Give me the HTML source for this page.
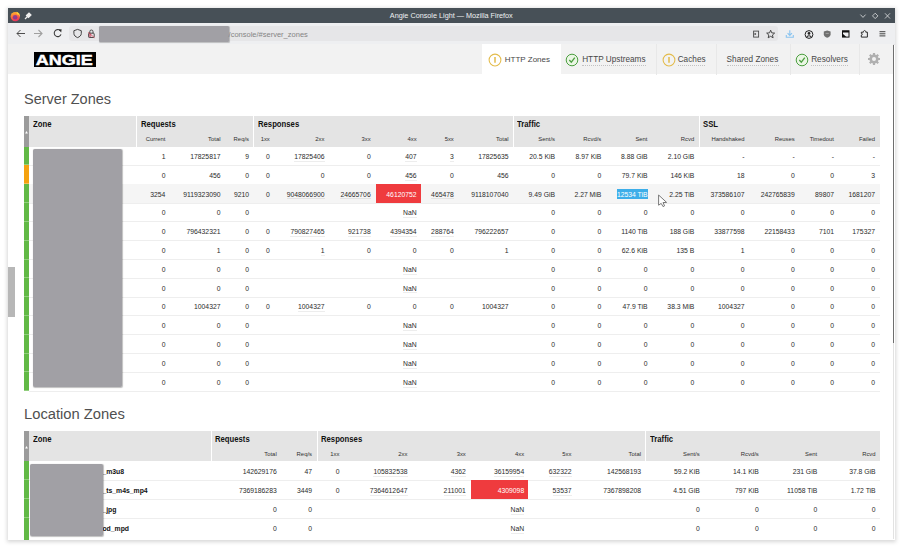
<!DOCTYPE html>
<html><head><meta charset="utf-8"><style>
html,body{margin:0;padding:0;}
body{width:904px;height:548px;overflow:hidden;position:relative;background:#fff;font-family:"Liberation Sans",sans-serif;}
.t{position:absolute;white-space:nowrap;}
.b{position:absolute;}
.u{border-bottom:1px solid rgba(0,0,0,0.07);padding-bottom:0.8px;}
</style></head><body>
<div class="b" style="left:8.00px;top:8.00px;width:886.50px;height:531.50px;background:#fff;box-shadow:0 0.5px 4px 1px rgba(0,0,0,0.16);"></div>
<div class="b" style="left:0;top:0;width:894.5px;height:539.5px;overflow:hidden">
<div class="b" style="left:8.00px;top:8.00px;width:886.50px;height:14.50px;background:#475057;"></div>
<div class="t" style="left:151.30px;top:10.83px;width:600px;text-align:center;font-size:7.25px;line-height:10.149999999999999px;color:#eef0f2;font-weight:normal;">Angie Console Light — Mozilla Firefox</div>
<svg class="b" style="left:10px;top:10.5px" width="11" height="11" viewBox="0 0 11 11"><defs><linearGradient id="ff" x1="0.2" y1="0" x2="0.5" y2="1"><stop offset="0" stop-color="#ffbd2e"/><stop offset="0.45" stop-color="#ff7139"/><stop offset="1" stop-color="#e8305f"/></linearGradient></defs><circle cx="5.3" cy="5.6" r="4.7" fill="url(#ff)"/><circle cx="5.1" cy="6.2" r="2.3" fill="#6e2fa8" opacity="0.75"/><path d="M6.5 0.8 C8.8 1.5 10.2 3.5 10 6 C9.6 4.4 8.2 3.2 6.8 3.2 Z" fill="#ffd43b"/></svg>
<svg class="b" style="left:24px;top:12px" width="8" height="8" viewBox="0 0 8 8"><path d="M1 7 L3.5 4.5 M2.5 3.5 L5 1 L7 3 L4.5 5.5 Z" stroke="#eee" stroke-width="1.2" fill="#eee"/></svg>
<svg class="b" style="left:858px;top:12px" width="34" height="8" viewBox="0 0 34 8"><path d="M2.4 2.6 L5 5.4 L7.6 2.6" stroke="#d8dadc" stroke-width="0.85" fill="none"/><path d="M17.2 1.2 L19.9 3.9 L17.2 6.6 L14.5 3.9 Z" stroke="#d8dadc" stroke-width="0.85" fill="none"/><path d="M27 1.3 L32 6.5 M32 1.3 L27 6.5" stroke="#d8dadc" stroke-width="0.85" fill="none"/></svg>
<div class="b" style="left:8.00px;top:22.50px;width:886.50px;height:21.50px;background:#eeeff1;"></div>
<div class="b" style="left:8.00px;top:43.60px;width:886.50px;height:0.80px;background:#e3e3e5;"></div>
<svg class="b" style="left:14px;top:28px" width="60" height="11" viewBox="0 0 60 11"><path d="M3 5.5 H11 M6.5 2 L3 5.5 L6.5 9" stroke="#454545" stroke-width="0.95" fill="none"/><path d="M20 5.5 H28 M24.5 2 L28 5.5 L24.5 9" stroke="#a0a0a0" stroke-width="1.1" fill="none"/><path d="M46.2 2.6 A3.5 3.5 0 1 0 47.0 6.4" stroke="#3b3b3b" stroke-width="1.05" fill="none"/><path d="M44.6 1.6 L47.6 1.3 L47.2 4.4 Z" fill="#2b2b2b"/></svg>
<div class="b" style="left:69.00px;top:25.60px;width:708.60px;height:15.80px;background:#e6e6e8;border-radius:3px;"></div>
<svg class="b" style="left:72px;top:28px" width="26" height="11" viewBox="0 0 26 11"><path d="M5.6 1.4 L9.3 2.7 V5.4 C9.3 7.6 7.6 8.8 5.6 9.6 C3.6 8.8 1.9 7.6 1.9 5.4 V2.7 Z" stroke="#3b3b3b" stroke-width="0.95" fill="none"/><rect x="16.6" y="5.2" width="5.6" height="4.3" rx="0.7" stroke="#3b3b3b" stroke-width="0.9" fill="none"/><path d="M17.8 5.2 V3.6 A1.6 1.6 0 0 1 21 3.6 V5.2" stroke="#3b3b3b" stroke-width="0.9" fill="none"/><path d="M16.2 4.3 L22.6 9.8" stroke="#d7263d" stroke-width="0.8" opacity="0.8"/><rect x="16.8" y="5.6" width="2.4" height="3.6" fill="#c0304a" opacity="0.55"/></svg>
<div class="b" style="left:99.00px;top:26.00px;width:129.90px;height:16.30px;background:#a1a0a5;border-radius:1.5px;box-shadow:0.5px 0.5px 0.8px rgba(0,0,0,0.2);"></div>
<div class="t" style="left:228.60px;top:30.15px;font-size:7.5px;line-height:10.5px;color:#858585;font-weight:normal;">/console/#server_zones</div>
<svg class="b" style="left:750px;top:27.5px" width="140" height="12" viewBox="0 0 140 12"><rect x="3.6" y="3.1" width="5" height="6" stroke="#4a4a4a" stroke-width="0.9" fill="none"/><path d="M4.6 4.8 L6.4 6 L4.6 7.2 Z" fill="#222"/><path d="M20.65 2.20 L21.77 4.86 L24.64 5.10 L22.46 6.99 L23.12 9.80 L20.65 8.30 L18.18 9.80 L18.84 6.99 L16.66 5.10 L19.53 4.86 Z" stroke="#3a3a3a" stroke-width="0.9" fill="none" stroke-linejoin="round"/><path d="M39.8 2.2 V7.2 M37.6 5.2 L39.8 7.4 L42 5.2 M36.3 7 V9.2 H43.3 V7" stroke="#8ac4f0" stroke-width="1.1" fill="none"/><circle cx="59" cy="6.5" r="3.9" stroke="#222" stroke-width="1" fill="none"/><circle cx="59" cy="5.4" r="1.35" fill="#222"/><path d="M56.8 9 C57.4 7.4 60.6 7.4 61.2 9" stroke="#222" stroke-width="1.1" fill="none"/><path d="M77.2 2.6 L80.6 3.6 V6.2 C80.6 8.1 79 9.0 77.2 9.7 C75.4 9.0 73.8 8.1 73.8 6.2 V3.6 Z" fill="#707070"/><path d="M75.6 5.4 H78.8" stroke="#b8b8b8" stroke-width="0.7"/><rect x="92.5" y="2.8" width="6.5" height="6.3" stroke="#111" stroke-width="1" fill="none"/><rect x="92.5" y="2.8" width="6.5" height="1.7" fill="#111"/><path d="M92.5 5.4 L92.5 9.1 L96.4 9.1 Z" fill="#111"/><path d="M111.3 9.1 V7.1 C112.7 7.1 112.7 5.3 111.3 5.3 V4.2 H113.4 C113.2 2 116 2 115.8 4.2 H117.4 V9.1 Z" stroke="#222" stroke-width="0.95" fill="none" stroke-linejoin="round"/><path d="M129.5 3.7 H135.4 M129.5 5.8 H135.4 M129.5 7.9 H135.4" stroke="#222" stroke-width="0.85"/></svg>
<div class="b" style="left:8.00px;top:44.40px;width:884.90px;height:30.10px;background:#f2f2f2;"></div>
<div class="b" style="left:892.90px;top:44.60px;width:1.20px;height:494.90px;background:#e2e2e2;"></div>
<div class="b" style="left:892.90px;top:44.60px;width:1.20px;height:298.10px;background:#6e6e6e;"></div>
<div class="b" style="left:34.30px;top:51.90px;width:61.30px;height:15.60px;background:#000;"></div>
<svg class="b" style="left:34.3px;top:51.9px" width="61" height="15.2" viewBox="0 0 61 15.2"><text x="1.7" y="13.15" textLength="57.0" lengthAdjust="spacingAndGlyphs" font-family="Liberation Sans" font-weight="bold" font-size="15.4" fill="#fff" stroke="#fff" stroke-width="0.45">ANGIE</text></svg>
<div class="b" style="left:482.10px;top:44.40px;width:78.50px;height:30.10px;background:#fff;"></div>
<div class="b" style="left:655.90px;top:44.00px;width:1.00px;height:30.50px;background:#e8e8e8;"></div>
<div class="b" style="left:715.80px;top:44.00px;width:1.00px;height:30.50px;background:#e8e8e8;"></div>
<div class="b" style="left:789.70px;top:44.00px;width:1.00px;height:30.50px;background:#e8e8e8;"></div>
<div class="b" style="left:858.80px;top:44.00px;width:1.00px;height:30.50px;background:#e8e8e8;"></div>
<svg class="b" style="left:487.90px;top:53.00px" width="14" height="14" viewBox="0 0 14 14"><circle cx="7" cy="7" r="5.9" stroke="#e3bb4a" stroke-width="1.05" fill="none"/><path d="M7 3.9 V9.8" stroke="#e3bb4a" stroke-width="1.5"/></svg>
<div class="t" style="left:504.80px;top:54.00px;font-size:8.0px;line-height:11.2px;color:#474747;font-weight:normal;">HTTP Zones</div>
<svg class="b" style="left:565.40px;top:53.20px" width="14" height="14" viewBox="0 0 14 14"><circle cx="7" cy="7" r="5.8" stroke="#4c9f40" stroke-width="1.0" fill="#eaf6e4"/><path d="M4.3 7.0 L6.3 9.2 L9.8 4.7" stroke="#4c9f40" stroke-width="1.3" fill="none"/></svg>
<div class="t" style="left:582.20px;top:53.86px;font-size:8.2px;line-height:11.479999999999999px;color:#474747;font-weight:normal;letter-spacing:0.02px;">HTTP Upstreams</div>
<div class="b" style="left:582.20px;top:65.0px;width:63.60px;height:0;border-top:1px dotted #c2c2c2"></div>
<svg class="b" style="left:661.50px;top:53.00px" width="14" height="14" viewBox="0 0 14 14"><circle cx="7" cy="7" r="5.9" stroke="#e3bb4a" stroke-width="1.05" fill="none"/><path d="M7 3.9 V9.8" stroke="#e3bb4a" stroke-width="1.5"/></svg>
<div class="t" style="left:677.70px;top:53.86px;font-size:8.2px;line-height:11.479999999999999px;color:#474747;font-weight:normal;letter-spacing:0.02px;">Caches</div>
<div class="b" style="left:677.70px;top:65.0px;width:27.60px;height:0;border-top:1px dotted #c2c2c2"></div>
<div class="t" style="left:726.60px;top:53.86px;font-size:8.2px;line-height:11.479999999999999px;color:#474747;font-weight:normal;letter-spacing:0.02px;">Shared Zones</div>
<div class="b" style="left:726.60px;top:65.0px;width:52.50px;height:0;border-top:1px dotted #c2c2c2"></div>
<svg class="b" style="left:794.50px;top:53.20px" width="14" height="14" viewBox="0 0 14 14"><circle cx="7" cy="7" r="5.8" stroke="#4c9f40" stroke-width="1.0" fill="#eaf6e4"/><path d="M4.3 7.0 L6.3 9.2 L9.8 4.7" stroke="#4c9f40" stroke-width="1.3" fill="none"/></svg>
<div class="t" style="left:811.20px;top:53.86px;font-size:8.2px;line-height:11.479999999999999px;color:#474747;font-weight:normal;letter-spacing:0.02px;">Resolvers</div>
<div class="b" style="left:811.20px;top:65.0px;width:36.50px;height:0;border-top:1px dotted #c2c2c2"></div>
<svg class="b" style="left:867px;top:52.3px" width="14" height="14" viewBox="0 0 14 14"><circle cx="7" cy="7" r="4.6" fill="#b0b0b0"/><g stroke="#b0b0b0" stroke-width="2.2"><path d="M7 1 V13 M1 7 H13 M2.8 2.8 L11.2 11.2 M11.2 2.8 L2.8 11.2"/></g><circle cx="7" cy="7" r="2" fill="#f2f2f2"/></svg>
<div class="t" style="left:24.00px;top:87.66px;font-size:15.2px;line-height:21.279999999999998px;color:#505050;font-weight:normal;transform:scaleX(0.955);transform-origin:0 0;">Server Zones</div>
<div class="t" style="left:24.00px;top:403.26px;font-size:15.2px;line-height:21.279999999999998px;color:#505050;font-weight:normal;transform:scaleX(0.971);transform-origin:0 0;">Location Zones</div>
<div class="b" style="left:24.00px;top:116.00px;width:856.00px;height:30.60px;background:#e4e4e4;"></div>
<div class="b" style="left:24.00px;top:116.00px;width:5.00px;height:30.60px;background:#9b9b9b;"></div>
<svg class="b" style="left:24.00px;top:130.00px" width="5" height="5" viewBox="0 0 5 5"><path d="M1.1 3.6 L3.9 3.6 L2.5 1.0 Z" fill="#fff"/></svg>
<div class="t" style="left:33.00px;top:118.59px;font-size:8.3px;line-height:11.620000000000001px;color:#111;font-weight:bold;transform:scaleX(0.93);transform-origin:0 0;">Zone</div>
<div class="t" style="left:141.10px;top:118.59px;font-size:8.3px;line-height:11.620000000000001px;color:#111;font-weight:bold;transform:scaleX(0.93);transform-origin:0 0;">Requests</div>
<div class="b" style="left:136.00px;top:116.00px;width:1.00px;height:30.60px;background:#fff;"></div>
<div class="t" style="left:257.70px;top:118.59px;font-size:8.3px;line-height:11.620000000000001px;color:#111;font-weight:bold;transform:scaleX(0.93);transform-origin:0 0;">Responses</div>
<div class="b" style="left:253.00px;top:116.00px;width:1.00px;height:30.60px;background:#fff;"></div>
<div class="t" style="left:517.30px;top:118.59px;font-size:8.3px;line-height:11.620000000000001px;color:#111;font-weight:bold;transform:scaleX(0.93);transform-origin:0 0;">Traffic</div>
<div class="b" style="left:512.50px;top:116.00px;width:1.00px;height:30.60px;background:#fff;"></div>
<div class="t" style="left:702.50px;top:118.59px;font-size:8.3px;line-height:11.620000000000001px;color:#111;font-weight:bold;transform:scaleX(0.93);transform-origin:0 0;">SSL</div>
<div class="b" style="left:698.50px;top:116.00px;width:1.00px;height:30.60px;background:#fff;"></div>
<div class="t" style="left:-134.60px;top:135.37px;width:300px;text-align:right;font-size:5.9px;line-height:8.26px;color:#303030;font-weight:normal;">Current</div>
<div class="t" style="left:-79.50px;top:135.37px;width:300px;text-align:right;font-size:5.9px;line-height:8.26px;color:#303030;font-weight:normal;">Total</div>
<div class="t" style="left:-51.00px;top:135.37px;width:300px;text-align:right;font-size:5.9px;line-height:8.26px;color:#303030;font-weight:normal;">Req/s</div>
<div class="t" style="left:-30.20px;top:135.37px;width:300px;text-align:right;font-size:5.9px;line-height:8.26px;color:#303030;font-weight:normal;">1xx</div>
<div class="t" style="left:24.50px;top:135.37px;width:300px;text-align:right;font-size:5.9px;line-height:8.26px;color:#303030;font-weight:normal;">2xx</div>
<div class="t" style="left:70.70px;top:135.37px;width:300px;text-align:right;font-size:5.9px;line-height:8.26px;color:#303030;font-weight:normal;">3xx</div>
<div class="t" style="left:116.60px;top:135.37px;width:300px;text-align:right;font-size:5.9px;line-height:8.26px;color:#303030;font-weight:normal;">4xx</div>
<div class="t" style="left:153.80px;top:135.37px;width:300px;text-align:right;font-size:5.9px;line-height:8.26px;color:#303030;font-weight:normal;">5xx</div>
<div class="t" style="left:208.50px;top:135.37px;width:300px;text-align:right;font-size:5.9px;line-height:8.26px;color:#303030;font-weight:normal;">Total</div>
<div class="t" style="left:255.00px;top:135.37px;width:300px;text-align:right;font-size:5.9px;line-height:8.26px;color:#303030;font-weight:normal;">Sent/s</div>
<div class="t" style="left:301.30px;top:135.37px;width:300px;text-align:right;font-size:5.9px;line-height:8.26px;color:#303030;font-weight:normal;">Rcvd/s</div>
<div class="t" style="left:347.50px;top:135.37px;width:300px;text-align:right;font-size:5.9px;line-height:8.26px;color:#303030;font-weight:normal;">Sent</div>
<div class="t" style="left:394.20px;top:135.37px;width:300px;text-align:right;font-size:5.9px;line-height:8.26px;color:#303030;font-weight:normal;">Rcvd</div>
<div class="t" style="left:444.50px;top:135.37px;width:300px;text-align:right;font-size:5.9px;line-height:8.26px;color:#303030;font-weight:normal;">Handshaked</div>
<div class="t" style="left:494.70px;top:135.37px;width:300px;text-align:right;font-size:5.9px;line-height:8.26px;color:#303030;font-weight:normal;">Reuses</div>
<div class="t" style="left:534.00px;top:135.37px;width:300px;text-align:right;font-size:5.9px;line-height:8.26px;color:#303030;font-weight:normal;">Timedout</div>
<div class="t" style="left:575.00px;top:135.37px;width:300px;text-align:right;font-size:5.9px;line-height:8.26px;color:#303030;font-weight:normal;">Failed</div>
<div class="b" style="left:24.00px;top:146.60px;width:5.00px;height:18.82px;background:#62b946;"></div>
<div class="b" style="left:29.00px;top:164.92px;width:851.00px;height:1.00px;background:#eeeeee;"></div>
<div class="b" style="left:24.00px;top:164.00px;width:5.00px;height:1.00px;background:rgba(255,255,255,0.3);"></div>
<div class="b" style="left:24.00px;top:165.42px;width:5.00px;height:18.82px;background:#f5a20f;"></div>
<div class="b" style="left:29.00px;top:183.74px;width:851.00px;height:1.00px;background:#eeeeee;"></div>
<div class="b" style="left:24.00px;top:183.00px;width:5.00px;height:1.00px;background:rgba(255,255,255,0.3);"></div>
<div class="b" style="left:29.00px;top:184.24px;width:851.00px;height:18.82px;background:#f5f5f5;"></div>
<div class="b" style="left:24.00px;top:184.24px;width:5.00px;height:18.82px;background:#62b946;"></div>
<div class="b" style="left:29.00px;top:202.56px;width:851.00px;height:1.00px;background:#eeeeee;"></div>
<div class="b" style="left:24.00px;top:202.00px;width:5.00px;height:1.00px;background:rgba(255,255,255,0.3);"></div>
<div class="b" style="left:24.00px;top:203.06px;width:5.00px;height:18.82px;background:#62b946;"></div>
<div class="b" style="left:29.00px;top:221.38px;width:851.00px;height:1.00px;background:#eeeeee;"></div>
<div class="b" style="left:24.00px;top:221.00px;width:5.00px;height:1.00px;background:rgba(255,255,255,0.3);"></div>
<div class="b" style="left:24.00px;top:221.88px;width:5.00px;height:18.82px;background:#62b946;"></div>
<div class="b" style="left:29.00px;top:240.20px;width:851.00px;height:1.00px;background:#eeeeee;"></div>
<div class="b" style="left:24.00px;top:240.00px;width:5.00px;height:1.00px;background:rgba(255,255,255,0.3);"></div>
<div class="b" style="left:24.00px;top:240.70px;width:5.00px;height:18.82px;background:#62b946;"></div>
<div class="b" style="left:29.00px;top:259.02px;width:851.00px;height:1.00px;background:#eeeeee;"></div>
<div class="b" style="left:24.00px;top:259.00px;width:5.00px;height:1.00px;background:rgba(255,255,255,0.3);"></div>
<div class="b" style="left:24.00px;top:259.52px;width:5.00px;height:18.82px;background:#62b946;"></div>
<div class="b" style="left:29.00px;top:277.84px;width:851.00px;height:1.00px;background:#eeeeee;"></div>
<div class="b" style="left:24.00px;top:277.00px;width:5.00px;height:1.00px;background:rgba(255,255,255,0.3);"></div>
<div class="b" style="left:24.00px;top:278.34px;width:5.00px;height:18.82px;background:#62b946;"></div>
<div class="b" style="left:29.00px;top:296.66px;width:851.00px;height:1.00px;background:#eeeeee;"></div>
<div class="b" style="left:24.00px;top:296.00px;width:5.00px;height:1.00px;background:rgba(255,255,255,0.3);"></div>
<div class="b" style="left:24.00px;top:297.16px;width:5.00px;height:18.82px;background:#62b946;"></div>
<div class="b" style="left:29.00px;top:315.48px;width:851.00px;height:1.00px;background:#eeeeee;"></div>
<div class="b" style="left:24.00px;top:315.00px;width:5.00px;height:1.00px;background:rgba(255,255,255,0.3);"></div>
<div class="b" style="left:24.00px;top:315.98px;width:5.00px;height:18.82px;background:#62b946;"></div>
<div class="b" style="left:29.00px;top:334.30px;width:851.00px;height:1.00px;background:#eeeeee;"></div>
<div class="b" style="left:24.00px;top:334.00px;width:5.00px;height:1.00px;background:rgba(255,255,255,0.3);"></div>
<div class="b" style="left:24.00px;top:334.80px;width:5.00px;height:18.82px;background:#62b946;"></div>
<div class="b" style="left:29.00px;top:353.12px;width:851.00px;height:1.00px;background:#eeeeee;"></div>
<div class="b" style="left:24.00px;top:353.00px;width:5.00px;height:1.00px;background:rgba(255,255,255,0.3);"></div>
<div class="b" style="left:24.00px;top:353.62px;width:5.00px;height:18.82px;background:#62b946;"></div>
<div class="b" style="left:29.00px;top:371.94px;width:851.00px;height:1.00px;background:#eeeeee;"></div>
<div class="b" style="left:24.00px;top:371.00px;width:5.00px;height:1.00px;background:rgba(255,255,255,0.3);"></div>
<div class="b" style="left:24.00px;top:372.44px;width:5.00px;height:18.82px;background:#62b946;"></div>
<div class="b" style="left:29.00px;top:390.76px;width:851.00px;height:1.00px;background:#eeeeee;"></div>
<div class="b" style="left:24.00px;top:390.00px;width:5.00px;height:1.00px;background:rgba(255,255,255,0.3);"></div>
<div class="b" style="left:375.70px;top:184.24px;width:45.00px;height:18.82px;background:#ef3b3e;"></div>
<div class="t" style="left:-134.60px;top:151.90px;width:300px;text-align:right;font-size:6.8px;line-height:9.52px;color:#2b2b2b;font-weight:normal;">1</div>
<div class="t" style="left:-79.50px;top:151.90px;width:300px;text-align:right;font-size:6.8px;line-height:9.52px;color:#2b2b2b;font-weight:normal;">17825817</div>
<div class="t" style="left:-51.00px;top:151.90px;width:300px;text-align:right;font-size:6.8px;line-height:9.52px;color:#2b2b2b;font-weight:normal;">9</div>
<div class="t" style="left:-30.20px;top:151.90px;width:300px;text-align:right;font-size:6.8px;line-height:9.52px;color:#2b2b2b;font-weight:normal;">0</div>
<div class="t" style="left:24.50px;top:151.90px;width:300px;text-align:right;font-size:6.8px;line-height:9.52px;color:#2b2b2b;font-weight:normal;"><span class="u">17825406</span></div>
<div class="t" style="left:70.70px;top:151.90px;width:300px;text-align:right;font-size:6.8px;line-height:9.52px;color:#2b2b2b;font-weight:normal;">0</div>
<div class="t" style="left:116.60px;top:151.90px;width:300px;text-align:right;font-size:6.8px;line-height:9.52px;color:#2b2b2b;font-weight:normal;"><span class="u">407</span></div>
<div class="t" style="left:153.80px;top:151.90px;width:300px;text-align:right;font-size:6.8px;line-height:9.52px;color:#2b2b2b;font-weight:normal;"><span class="u">3</span></div>
<div class="t" style="left:208.50px;top:151.90px;width:300px;text-align:right;font-size:6.8px;line-height:9.52px;color:#2b2b2b;font-weight:normal;">17825635</div>
<div class="t" style="left:255.00px;top:151.90px;width:300px;text-align:right;font-size:6.8px;line-height:9.52px;color:#2b2b2b;font-weight:normal;">20.5 KiB</div>
<div class="t" style="left:301.30px;top:151.90px;width:300px;text-align:right;font-size:6.8px;line-height:9.52px;color:#2b2b2b;font-weight:normal;">8.97 KiB</div>
<div class="t" style="left:347.50px;top:151.90px;width:300px;text-align:right;font-size:6.8px;line-height:9.52px;color:#2b2b2b;font-weight:normal;">8.88 GiB</div>
<div class="t" style="left:394.20px;top:151.90px;width:300px;text-align:right;font-size:6.8px;line-height:9.52px;color:#2b2b2b;font-weight:normal;">2.10 GiB</div>
<div class="t" style="left:444.50px;top:151.90px;width:300px;text-align:right;font-size:6.8px;line-height:9.52px;color:#2b2b2b;font-weight:normal;">-</div>
<div class="t" style="left:494.70px;top:151.90px;width:300px;text-align:right;font-size:6.8px;line-height:9.52px;color:#2b2b2b;font-weight:normal;">-</div>
<div class="t" style="left:534.00px;top:151.90px;width:300px;text-align:right;font-size:6.8px;line-height:9.52px;color:#2b2b2b;font-weight:normal;">-</div>
<div class="t" style="left:575.00px;top:151.90px;width:300px;text-align:right;font-size:6.8px;line-height:9.52px;color:#2b2b2b;font-weight:normal;">-</div>
<div class="t" style="left:-134.60px;top:170.72px;width:300px;text-align:right;font-size:6.8px;line-height:9.52px;color:#2b2b2b;font-weight:normal;">0</div>
<div class="t" style="left:-79.50px;top:170.72px;width:300px;text-align:right;font-size:6.8px;line-height:9.52px;color:#2b2b2b;font-weight:normal;">456</div>
<div class="t" style="left:-51.00px;top:170.72px;width:300px;text-align:right;font-size:6.8px;line-height:9.52px;color:#2b2b2b;font-weight:normal;">0</div>
<div class="t" style="left:-30.20px;top:170.72px;width:300px;text-align:right;font-size:6.8px;line-height:9.52px;color:#2b2b2b;font-weight:normal;">0</div>
<div class="t" style="left:24.50px;top:170.72px;width:300px;text-align:right;font-size:6.8px;line-height:9.52px;color:#2b2b2b;font-weight:normal;">0</div>
<div class="t" style="left:70.70px;top:170.72px;width:300px;text-align:right;font-size:6.8px;line-height:9.52px;color:#2b2b2b;font-weight:normal;">0</div>
<div class="t" style="left:116.60px;top:170.72px;width:300px;text-align:right;font-size:6.8px;line-height:9.52px;color:#2b2b2b;font-weight:normal;"><span class="u">456</span></div>
<div class="t" style="left:153.80px;top:170.72px;width:300px;text-align:right;font-size:6.8px;line-height:9.52px;color:#2b2b2b;font-weight:normal;">0</div>
<div class="t" style="left:208.50px;top:170.72px;width:300px;text-align:right;font-size:6.8px;line-height:9.52px;color:#2b2b2b;font-weight:normal;">456</div>
<div class="t" style="left:255.00px;top:170.72px;width:300px;text-align:right;font-size:6.8px;line-height:9.52px;color:#2b2b2b;font-weight:normal;">0</div>
<div class="t" style="left:301.30px;top:170.72px;width:300px;text-align:right;font-size:6.8px;line-height:9.52px;color:#2b2b2b;font-weight:normal;">0</div>
<div class="t" style="left:347.50px;top:170.72px;width:300px;text-align:right;font-size:6.8px;line-height:9.52px;color:#2b2b2b;font-weight:normal;">79.7 KiB</div>
<div class="t" style="left:394.20px;top:170.72px;width:300px;text-align:right;font-size:6.8px;line-height:9.52px;color:#2b2b2b;font-weight:normal;">146 KiB</div>
<div class="t" style="left:444.50px;top:170.72px;width:300px;text-align:right;font-size:6.8px;line-height:9.52px;color:#2b2b2b;font-weight:normal;">18</div>
<div class="t" style="left:494.70px;top:170.72px;width:300px;text-align:right;font-size:6.8px;line-height:9.52px;color:#2b2b2b;font-weight:normal;">0</div>
<div class="t" style="left:534.00px;top:170.72px;width:300px;text-align:right;font-size:6.8px;line-height:9.52px;color:#2b2b2b;font-weight:normal;">0</div>
<div class="t" style="left:575.00px;top:170.72px;width:300px;text-align:right;font-size:6.8px;line-height:9.52px;color:#2b2b2b;font-weight:normal;">3</div>
<div class="t" style="left:-134.60px;top:189.54px;width:300px;text-align:right;font-size:6.8px;line-height:9.52px;color:#2b2b2b;font-weight:normal;">3254</div>
<div class="t" style="left:-79.50px;top:189.54px;width:300px;text-align:right;font-size:6.8px;line-height:9.52px;color:#2b2b2b;font-weight:normal;">9119323090</div>
<div class="t" style="left:-51.00px;top:189.54px;width:300px;text-align:right;font-size:6.8px;line-height:9.52px;color:#2b2b2b;font-weight:normal;">9210</div>
<div class="t" style="left:-30.20px;top:189.54px;width:300px;text-align:right;font-size:6.8px;line-height:9.52px;color:#2b2b2b;font-weight:normal;">0</div>
<div class="t" style="left:24.50px;top:189.54px;width:300px;text-align:right;font-size:6.8px;line-height:9.52px;color:#2b2b2b;font-weight:normal;"><span class="u">9048066900</span></div>
<div class="t" style="left:70.70px;top:189.54px;width:300px;text-align:right;font-size:6.8px;line-height:9.52px;color:#2b2b2b;font-weight:normal;"><span class="u">24665706</span></div>
<div class="t" style="left:116.60px;top:189.54px;width:300px;text-align:right;font-size:6.8px;line-height:9.52px;color:#fff;font-weight:normal;">46120752</div>
<div class="t" style="left:153.80px;top:189.54px;width:300px;text-align:right;font-size:6.8px;line-height:9.52px;color:#2b2b2b;font-weight:normal;"><span class="u">465478</span></div>
<div class="t" style="left:208.50px;top:189.54px;width:300px;text-align:right;font-size:6.8px;line-height:9.52px;color:#2b2b2b;font-weight:normal;">9118107040</div>
<div class="t" style="left:255.00px;top:189.54px;width:300px;text-align:right;font-size:6.8px;line-height:9.52px;color:#2b2b2b;font-weight:normal;">9.49 GiB</div>
<div class="t" style="left:301.30px;top:189.54px;width:300px;text-align:right;font-size:6.8px;line-height:9.52px;color:#2b2b2b;font-weight:normal;">2.27 MiB</div>
<div class="t" style="left:347.50px;top:189.54px;width:300px;text-align:right;font-size:6.8px;line-height:9.52px;color:#2b2b2b;font-weight:normal;">12534 TiB</div>
<div class="t" style="left:394.20px;top:189.54px;width:300px;text-align:right;font-size:6.8px;line-height:9.52px;color:#2b2b2b;font-weight:normal;">2.25 TiB</div>
<div class="t" style="left:444.50px;top:189.54px;width:300px;text-align:right;font-size:6.8px;line-height:9.52px;color:#2b2b2b;font-weight:normal;">373586107</div>
<div class="t" style="left:494.70px;top:189.54px;width:300px;text-align:right;font-size:6.8px;line-height:9.52px;color:#2b2b2b;font-weight:normal;">242765839</div>
<div class="t" style="left:534.00px;top:189.54px;width:300px;text-align:right;font-size:6.8px;line-height:9.52px;color:#2b2b2b;font-weight:normal;">89807</div>
<div class="t" style="left:575.00px;top:189.54px;width:300px;text-align:right;font-size:6.8px;line-height:9.52px;color:#2b2b2b;font-weight:normal;">1681207</div>
<div class="t" style="left:-134.60px;top:208.36px;width:300px;text-align:right;font-size:6.8px;line-height:9.52px;color:#2b2b2b;font-weight:normal;">0</div>
<div class="t" style="left:-79.50px;top:208.36px;width:300px;text-align:right;font-size:6.8px;line-height:9.52px;color:#2b2b2b;font-weight:normal;">0</div>
<div class="t" style="left:-51.00px;top:208.36px;width:300px;text-align:right;font-size:6.8px;line-height:9.52px;color:#2b2b2b;font-weight:normal;">0</div>
<div class="t" style="left:116.60px;top:208.36px;width:300px;text-align:right;font-size:6.8px;line-height:9.52px;color:#2b2b2b;font-weight:normal;"><span class="u">NaN</span></div>
<div class="t" style="left:255.00px;top:208.36px;width:300px;text-align:right;font-size:6.8px;line-height:9.52px;color:#2b2b2b;font-weight:normal;">0</div>
<div class="t" style="left:301.30px;top:208.36px;width:300px;text-align:right;font-size:6.8px;line-height:9.52px;color:#2b2b2b;font-weight:normal;">0</div>
<div class="t" style="left:347.50px;top:208.36px;width:300px;text-align:right;font-size:6.8px;line-height:9.52px;color:#2b2b2b;font-weight:normal;">0</div>
<div class="t" style="left:394.20px;top:208.36px;width:300px;text-align:right;font-size:6.8px;line-height:9.52px;color:#2b2b2b;font-weight:normal;">0</div>
<div class="t" style="left:444.50px;top:208.36px;width:300px;text-align:right;font-size:6.8px;line-height:9.52px;color:#2b2b2b;font-weight:normal;">0</div>
<div class="t" style="left:494.70px;top:208.36px;width:300px;text-align:right;font-size:6.8px;line-height:9.52px;color:#2b2b2b;font-weight:normal;">0</div>
<div class="t" style="left:534.00px;top:208.36px;width:300px;text-align:right;font-size:6.8px;line-height:9.52px;color:#2b2b2b;font-weight:normal;">0</div>
<div class="t" style="left:575.00px;top:208.36px;width:300px;text-align:right;font-size:6.8px;line-height:9.52px;color:#2b2b2b;font-weight:normal;">0</div>
<div class="t" style="left:-134.60px;top:227.18px;width:300px;text-align:right;font-size:6.8px;line-height:9.52px;color:#2b2b2b;font-weight:normal;">0</div>
<div class="t" style="left:-79.50px;top:227.18px;width:300px;text-align:right;font-size:6.8px;line-height:9.52px;color:#2b2b2b;font-weight:normal;">796432321</div>
<div class="t" style="left:-51.00px;top:227.18px;width:300px;text-align:right;font-size:6.8px;line-height:9.52px;color:#2b2b2b;font-weight:normal;">0</div>
<div class="t" style="left:-30.20px;top:227.18px;width:300px;text-align:right;font-size:6.8px;line-height:9.52px;color:#2b2b2b;font-weight:normal;">0</div>
<div class="t" style="left:24.50px;top:227.18px;width:300px;text-align:right;font-size:6.8px;line-height:9.52px;color:#2b2b2b;font-weight:normal;"><span class="u">790827465</span></div>
<div class="t" style="left:70.70px;top:227.18px;width:300px;text-align:right;font-size:6.8px;line-height:9.52px;color:#2b2b2b;font-weight:normal;"><span class="u">921738</span></div>
<div class="t" style="left:116.60px;top:227.18px;width:300px;text-align:right;font-size:6.8px;line-height:9.52px;color:#2b2b2b;font-weight:normal;"><span class="u">4394354</span></div>
<div class="t" style="left:153.80px;top:227.18px;width:300px;text-align:right;font-size:6.8px;line-height:9.52px;color:#2b2b2b;font-weight:normal;"><span class="u">288764</span></div>
<div class="t" style="left:208.50px;top:227.18px;width:300px;text-align:right;font-size:6.8px;line-height:9.52px;color:#2b2b2b;font-weight:normal;">796222657</div>
<div class="t" style="left:255.00px;top:227.18px;width:300px;text-align:right;font-size:6.8px;line-height:9.52px;color:#2b2b2b;font-weight:normal;">0</div>
<div class="t" style="left:301.30px;top:227.18px;width:300px;text-align:right;font-size:6.8px;line-height:9.52px;color:#2b2b2b;font-weight:normal;">0</div>
<div class="t" style="left:347.50px;top:227.18px;width:300px;text-align:right;font-size:6.8px;line-height:9.52px;color:#2b2b2b;font-weight:normal;">1140 TiB</div>
<div class="t" style="left:394.20px;top:227.18px;width:300px;text-align:right;font-size:6.8px;line-height:9.52px;color:#2b2b2b;font-weight:normal;">188 GiB</div>
<div class="t" style="left:444.50px;top:227.18px;width:300px;text-align:right;font-size:6.8px;line-height:9.52px;color:#2b2b2b;font-weight:normal;">33877598</div>
<div class="t" style="left:494.70px;top:227.18px;width:300px;text-align:right;font-size:6.8px;line-height:9.52px;color:#2b2b2b;font-weight:normal;">22158433</div>
<div class="t" style="left:534.00px;top:227.18px;width:300px;text-align:right;font-size:6.8px;line-height:9.52px;color:#2b2b2b;font-weight:normal;">7101</div>
<div class="t" style="left:575.00px;top:227.18px;width:300px;text-align:right;font-size:6.8px;line-height:9.52px;color:#2b2b2b;font-weight:normal;">175327</div>
<div class="t" style="left:-134.60px;top:246.00px;width:300px;text-align:right;font-size:6.8px;line-height:9.52px;color:#2b2b2b;font-weight:normal;">0</div>
<div class="t" style="left:-79.50px;top:246.00px;width:300px;text-align:right;font-size:6.8px;line-height:9.52px;color:#2b2b2b;font-weight:normal;">1</div>
<div class="t" style="left:-51.00px;top:246.00px;width:300px;text-align:right;font-size:6.8px;line-height:9.52px;color:#2b2b2b;font-weight:normal;">0</div>
<div class="t" style="left:-30.20px;top:246.00px;width:300px;text-align:right;font-size:6.8px;line-height:9.52px;color:#2b2b2b;font-weight:normal;">0</div>
<div class="t" style="left:24.50px;top:246.00px;width:300px;text-align:right;font-size:6.8px;line-height:9.52px;color:#2b2b2b;font-weight:normal;"><span class="u">1</span></div>
<div class="t" style="left:70.70px;top:246.00px;width:300px;text-align:right;font-size:6.8px;line-height:9.52px;color:#2b2b2b;font-weight:normal;">0</div>
<div class="t" style="left:116.60px;top:246.00px;width:300px;text-align:right;font-size:6.8px;line-height:9.52px;color:#2b2b2b;font-weight:normal;">0</div>
<div class="t" style="left:153.80px;top:246.00px;width:300px;text-align:right;font-size:6.8px;line-height:9.52px;color:#2b2b2b;font-weight:normal;">0</div>
<div class="t" style="left:208.50px;top:246.00px;width:300px;text-align:right;font-size:6.8px;line-height:9.52px;color:#2b2b2b;font-weight:normal;">1</div>
<div class="t" style="left:255.00px;top:246.00px;width:300px;text-align:right;font-size:6.8px;line-height:9.52px;color:#2b2b2b;font-weight:normal;">0</div>
<div class="t" style="left:301.30px;top:246.00px;width:300px;text-align:right;font-size:6.8px;line-height:9.52px;color:#2b2b2b;font-weight:normal;">0</div>
<div class="t" style="left:347.50px;top:246.00px;width:300px;text-align:right;font-size:6.8px;line-height:9.52px;color:#2b2b2b;font-weight:normal;">62.6 KiB</div>
<div class="t" style="left:394.20px;top:246.00px;width:300px;text-align:right;font-size:6.8px;line-height:9.52px;color:#2b2b2b;font-weight:normal;">135 B</div>
<div class="t" style="left:444.50px;top:246.00px;width:300px;text-align:right;font-size:6.8px;line-height:9.52px;color:#2b2b2b;font-weight:normal;">1</div>
<div class="t" style="left:494.70px;top:246.00px;width:300px;text-align:right;font-size:6.8px;line-height:9.52px;color:#2b2b2b;font-weight:normal;">0</div>
<div class="t" style="left:534.00px;top:246.00px;width:300px;text-align:right;font-size:6.8px;line-height:9.52px;color:#2b2b2b;font-weight:normal;">0</div>
<div class="t" style="left:575.00px;top:246.00px;width:300px;text-align:right;font-size:6.8px;line-height:9.52px;color:#2b2b2b;font-weight:normal;">0</div>
<div class="t" style="left:-134.60px;top:264.82px;width:300px;text-align:right;font-size:6.8px;line-height:9.52px;color:#2b2b2b;font-weight:normal;">0</div>
<div class="t" style="left:-79.50px;top:264.82px;width:300px;text-align:right;font-size:6.8px;line-height:9.52px;color:#2b2b2b;font-weight:normal;">0</div>
<div class="t" style="left:-51.00px;top:264.82px;width:300px;text-align:right;font-size:6.8px;line-height:9.52px;color:#2b2b2b;font-weight:normal;">0</div>
<div class="t" style="left:116.60px;top:264.82px;width:300px;text-align:right;font-size:6.8px;line-height:9.52px;color:#2b2b2b;font-weight:normal;"><span class="u">NaN</span></div>
<div class="t" style="left:255.00px;top:264.82px;width:300px;text-align:right;font-size:6.8px;line-height:9.52px;color:#2b2b2b;font-weight:normal;">0</div>
<div class="t" style="left:301.30px;top:264.82px;width:300px;text-align:right;font-size:6.8px;line-height:9.52px;color:#2b2b2b;font-weight:normal;">0</div>
<div class="t" style="left:347.50px;top:264.82px;width:300px;text-align:right;font-size:6.8px;line-height:9.52px;color:#2b2b2b;font-weight:normal;">0</div>
<div class="t" style="left:394.20px;top:264.82px;width:300px;text-align:right;font-size:6.8px;line-height:9.52px;color:#2b2b2b;font-weight:normal;">0</div>
<div class="t" style="left:444.50px;top:264.82px;width:300px;text-align:right;font-size:6.8px;line-height:9.52px;color:#2b2b2b;font-weight:normal;">0</div>
<div class="t" style="left:494.70px;top:264.82px;width:300px;text-align:right;font-size:6.8px;line-height:9.52px;color:#2b2b2b;font-weight:normal;">0</div>
<div class="t" style="left:534.00px;top:264.82px;width:300px;text-align:right;font-size:6.8px;line-height:9.52px;color:#2b2b2b;font-weight:normal;">0</div>
<div class="t" style="left:575.00px;top:264.82px;width:300px;text-align:right;font-size:6.8px;line-height:9.52px;color:#2b2b2b;font-weight:normal;">0</div>
<div class="t" style="left:-134.60px;top:283.64px;width:300px;text-align:right;font-size:6.8px;line-height:9.52px;color:#2b2b2b;font-weight:normal;">0</div>
<div class="t" style="left:-79.50px;top:283.64px;width:300px;text-align:right;font-size:6.8px;line-height:9.52px;color:#2b2b2b;font-weight:normal;">0</div>
<div class="t" style="left:-51.00px;top:283.64px;width:300px;text-align:right;font-size:6.8px;line-height:9.52px;color:#2b2b2b;font-weight:normal;">0</div>
<div class="t" style="left:116.60px;top:283.64px;width:300px;text-align:right;font-size:6.8px;line-height:9.52px;color:#2b2b2b;font-weight:normal;"><span class="u">NaN</span></div>
<div class="t" style="left:255.00px;top:283.64px;width:300px;text-align:right;font-size:6.8px;line-height:9.52px;color:#2b2b2b;font-weight:normal;">0</div>
<div class="t" style="left:301.30px;top:283.64px;width:300px;text-align:right;font-size:6.8px;line-height:9.52px;color:#2b2b2b;font-weight:normal;">0</div>
<div class="t" style="left:347.50px;top:283.64px;width:300px;text-align:right;font-size:6.8px;line-height:9.52px;color:#2b2b2b;font-weight:normal;">0</div>
<div class="t" style="left:394.20px;top:283.64px;width:300px;text-align:right;font-size:6.8px;line-height:9.52px;color:#2b2b2b;font-weight:normal;">0</div>
<div class="t" style="left:444.50px;top:283.64px;width:300px;text-align:right;font-size:6.8px;line-height:9.52px;color:#2b2b2b;font-weight:normal;">0</div>
<div class="t" style="left:494.70px;top:283.64px;width:300px;text-align:right;font-size:6.8px;line-height:9.52px;color:#2b2b2b;font-weight:normal;">0</div>
<div class="t" style="left:534.00px;top:283.64px;width:300px;text-align:right;font-size:6.8px;line-height:9.52px;color:#2b2b2b;font-weight:normal;">0</div>
<div class="t" style="left:575.00px;top:283.64px;width:300px;text-align:right;font-size:6.8px;line-height:9.52px;color:#2b2b2b;font-weight:normal;">0</div>
<div class="t" style="left:-134.60px;top:302.46px;width:300px;text-align:right;font-size:6.8px;line-height:9.52px;color:#2b2b2b;font-weight:normal;">0</div>
<div class="t" style="left:-79.50px;top:302.46px;width:300px;text-align:right;font-size:6.8px;line-height:9.52px;color:#2b2b2b;font-weight:normal;">1004327</div>
<div class="t" style="left:-51.00px;top:302.46px;width:300px;text-align:right;font-size:6.8px;line-height:9.52px;color:#2b2b2b;font-weight:normal;">0</div>
<div class="t" style="left:-30.20px;top:302.46px;width:300px;text-align:right;font-size:6.8px;line-height:9.52px;color:#2b2b2b;font-weight:normal;">0</div>
<div class="t" style="left:24.50px;top:302.46px;width:300px;text-align:right;font-size:6.8px;line-height:9.52px;color:#2b2b2b;font-weight:normal;"><span class="u">1004327</span></div>
<div class="t" style="left:70.70px;top:302.46px;width:300px;text-align:right;font-size:6.8px;line-height:9.52px;color:#2b2b2b;font-weight:normal;">0</div>
<div class="t" style="left:116.60px;top:302.46px;width:300px;text-align:right;font-size:6.8px;line-height:9.52px;color:#2b2b2b;font-weight:normal;">0</div>
<div class="t" style="left:153.80px;top:302.46px;width:300px;text-align:right;font-size:6.8px;line-height:9.52px;color:#2b2b2b;font-weight:normal;">0</div>
<div class="t" style="left:208.50px;top:302.46px;width:300px;text-align:right;font-size:6.8px;line-height:9.52px;color:#2b2b2b;font-weight:normal;">1004327</div>
<div class="t" style="left:255.00px;top:302.46px;width:300px;text-align:right;font-size:6.8px;line-height:9.52px;color:#2b2b2b;font-weight:normal;">0</div>
<div class="t" style="left:301.30px;top:302.46px;width:300px;text-align:right;font-size:6.8px;line-height:9.52px;color:#2b2b2b;font-weight:normal;">0</div>
<div class="t" style="left:347.50px;top:302.46px;width:300px;text-align:right;font-size:6.8px;line-height:9.52px;color:#2b2b2b;font-weight:normal;">47.9 TiB</div>
<div class="t" style="left:394.20px;top:302.46px;width:300px;text-align:right;font-size:6.8px;line-height:9.52px;color:#2b2b2b;font-weight:normal;">38.3 MiB</div>
<div class="t" style="left:444.50px;top:302.46px;width:300px;text-align:right;font-size:6.8px;line-height:9.52px;color:#2b2b2b;font-weight:normal;">1004327</div>
<div class="t" style="left:494.70px;top:302.46px;width:300px;text-align:right;font-size:6.8px;line-height:9.52px;color:#2b2b2b;font-weight:normal;">0</div>
<div class="t" style="left:534.00px;top:302.46px;width:300px;text-align:right;font-size:6.8px;line-height:9.52px;color:#2b2b2b;font-weight:normal;">0</div>
<div class="t" style="left:575.00px;top:302.46px;width:300px;text-align:right;font-size:6.8px;line-height:9.52px;color:#2b2b2b;font-weight:normal;">0</div>
<div class="t" style="left:-134.60px;top:321.28px;width:300px;text-align:right;font-size:6.8px;line-height:9.52px;color:#2b2b2b;font-weight:normal;">0</div>
<div class="t" style="left:-79.50px;top:321.28px;width:300px;text-align:right;font-size:6.8px;line-height:9.52px;color:#2b2b2b;font-weight:normal;">0</div>
<div class="t" style="left:-51.00px;top:321.28px;width:300px;text-align:right;font-size:6.8px;line-height:9.52px;color:#2b2b2b;font-weight:normal;">0</div>
<div class="t" style="left:116.60px;top:321.28px;width:300px;text-align:right;font-size:6.8px;line-height:9.52px;color:#2b2b2b;font-weight:normal;"><span class="u">NaN</span></div>
<div class="t" style="left:255.00px;top:321.28px;width:300px;text-align:right;font-size:6.8px;line-height:9.52px;color:#2b2b2b;font-weight:normal;">0</div>
<div class="t" style="left:301.30px;top:321.28px;width:300px;text-align:right;font-size:6.8px;line-height:9.52px;color:#2b2b2b;font-weight:normal;">0</div>
<div class="t" style="left:347.50px;top:321.28px;width:300px;text-align:right;font-size:6.8px;line-height:9.52px;color:#2b2b2b;font-weight:normal;">0</div>
<div class="t" style="left:394.20px;top:321.28px;width:300px;text-align:right;font-size:6.8px;line-height:9.52px;color:#2b2b2b;font-weight:normal;">0</div>
<div class="t" style="left:444.50px;top:321.28px;width:300px;text-align:right;font-size:6.8px;line-height:9.52px;color:#2b2b2b;font-weight:normal;">0</div>
<div class="t" style="left:494.70px;top:321.28px;width:300px;text-align:right;font-size:6.8px;line-height:9.52px;color:#2b2b2b;font-weight:normal;">0</div>
<div class="t" style="left:534.00px;top:321.28px;width:300px;text-align:right;font-size:6.8px;line-height:9.52px;color:#2b2b2b;font-weight:normal;">0</div>
<div class="t" style="left:575.00px;top:321.28px;width:300px;text-align:right;font-size:6.8px;line-height:9.52px;color:#2b2b2b;font-weight:normal;">0</div>
<div class="t" style="left:-134.60px;top:340.10px;width:300px;text-align:right;font-size:6.8px;line-height:9.52px;color:#2b2b2b;font-weight:normal;">0</div>
<div class="t" style="left:-79.50px;top:340.10px;width:300px;text-align:right;font-size:6.8px;line-height:9.52px;color:#2b2b2b;font-weight:normal;">0</div>
<div class="t" style="left:-51.00px;top:340.10px;width:300px;text-align:right;font-size:6.8px;line-height:9.52px;color:#2b2b2b;font-weight:normal;">0</div>
<div class="t" style="left:116.60px;top:340.10px;width:300px;text-align:right;font-size:6.8px;line-height:9.52px;color:#2b2b2b;font-weight:normal;"><span class="u">NaN</span></div>
<div class="t" style="left:255.00px;top:340.10px;width:300px;text-align:right;font-size:6.8px;line-height:9.52px;color:#2b2b2b;font-weight:normal;">0</div>
<div class="t" style="left:301.30px;top:340.10px;width:300px;text-align:right;font-size:6.8px;line-height:9.52px;color:#2b2b2b;font-weight:normal;">0</div>
<div class="t" style="left:347.50px;top:340.10px;width:300px;text-align:right;font-size:6.8px;line-height:9.52px;color:#2b2b2b;font-weight:normal;">0</div>
<div class="t" style="left:394.20px;top:340.10px;width:300px;text-align:right;font-size:6.8px;line-height:9.52px;color:#2b2b2b;font-weight:normal;">0</div>
<div class="t" style="left:444.50px;top:340.10px;width:300px;text-align:right;font-size:6.8px;line-height:9.52px;color:#2b2b2b;font-weight:normal;">0</div>
<div class="t" style="left:494.70px;top:340.10px;width:300px;text-align:right;font-size:6.8px;line-height:9.52px;color:#2b2b2b;font-weight:normal;">0</div>
<div class="t" style="left:534.00px;top:340.10px;width:300px;text-align:right;font-size:6.8px;line-height:9.52px;color:#2b2b2b;font-weight:normal;">0</div>
<div class="t" style="left:575.00px;top:340.10px;width:300px;text-align:right;font-size:6.8px;line-height:9.52px;color:#2b2b2b;font-weight:normal;">0</div>
<div class="t" style="left:-134.60px;top:358.92px;width:300px;text-align:right;font-size:6.8px;line-height:9.52px;color:#2b2b2b;font-weight:normal;">0</div>
<div class="t" style="left:-79.50px;top:358.92px;width:300px;text-align:right;font-size:6.8px;line-height:9.52px;color:#2b2b2b;font-weight:normal;">0</div>
<div class="t" style="left:-51.00px;top:358.92px;width:300px;text-align:right;font-size:6.8px;line-height:9.52px;color:#2b2b2b;font-weight:normal;">0</div>
<div class="t" style="left:116.60px;top:358.92px;width:300px;text-align:right;font-size:6.8px;line-height:9.52px;color:#2b2b2b;font-weight:normal;"><span class="u">NaN</span></div>
<div class="t" style="left:255.00px;top:358.92px;width:300px;text-align:right;font-size:6.8px;line-height:9.52px;color:#2b2b2b;font-weight:normal;">0</div>
<div class="t" style="left:301.30px;top:358.92px;width:300px;text-align:right;font-size:6.8px;line-height:9.52px;color:#2b2b2b;font-weight:normal;">0</div>
<div class="t" style="left:347.50px;top:358.92px;width:300px;text-align:right;font-size:6.8px;line-height:9.52px;color:#2b2b2b;font-weight:normal;">0</div>
<div class="t" style="left:394.20px;top:358.92px;width:300px;text-align:right;font-size:6.8px;line-height:9.52px;color:#2b2b2b;font-weight:normal;">0</div>
<div class="t" style="left:444.50px;top:358.92px;width:300px;text-align:right;font-size:6.8px;line-height:9.52px;color:#2b2b2b;font-weight:normal;">0</div>
<div class="t" style="left:494.70px;top:358.92px;width:300px;text-align:right;font-size:6.8px;line-height:9.52px;color:#2b2b2b;font-weight:normal;">0</div>
<div class="t" style="left:534.00px;top:358.92px;width:300px;text-align:right;font-size:6.8px;line-height:9.52px;color:#2b2b2b;font-weight:normal;">0</div>
<div class="t" style="left:575.00px;top:358.92px;width:300px;text-align:right;font-size:6.8px;line-height:9.52px;color:#2b2b2b;font-weight:normal;">0</div>
<div class="t" style="left:-134.60px;top:377.74px;width:300px;text-align:right;font-size:6.8px;line-height:9.52px;color:#2b2b2b;font-weight:normal;">0</div>
<div class="t" style="left:-79.50px;top:377.74px;width:300px;text-align:right;font-size:6.8px;line-height:9.52px;color:#2b2b2b;font-weight:normal;">0</div>
<div class="t" style="left:-51.00px;top:377.74px;width:300px;text-align:right;font-size:6.8px;line-height:9.52px;color:#2b2b2b;font-weight:normal;">0</div>
<div class="t" style="left:116.60px;top:377.74px;width:300px;text-align:right;font-size:6.8px;line-height:9.52px;color:#2b2b2b;font-weight:normal;"><span class="u">NaN</span></div>
<div class="t" style="left:255.00px;top:377.74px;width:300px;text-align:right;font-size:6.8px;line-height:9.52px;color:#2b2b2b;font-weight:normal;">0</div>
<div class="t" style="left:301.30px;top:377.74px;width:300px;text-align:right;font-size:6.8px;line-height:9.52px;color:#2b2b2b;font-weight:normal;">0</div>
<div class="t" style="left:347.50px;top:377.74px;width:300px;text-align:right;font-size:6.8px;line-height:9.52px;color:#2b2b2b;font-weight:normal;">0</div>
<div class="t" style="left:394.20px;top:377.74px;width:300px;text-align:right;font-size:6.8px;line-height:9.52px;color:#2b2b2b;font-weight:normal;">0</div>
<div class="t" style="left:444.50px;top:377.74px;width:300px;text-align:right;font-size:6.8px;line-height:9.52px;color:#2b2b2b;font-weight:normal;">0</div>
<div class="t" style="left:494.70px;top:377.74px;width:300px;text-align:right;font-size:6.8px;line-height:9.52px;color:#2b2b2b;font-weight:normal;">0</div>
<div class="t" style="left:534.00px;top:377.74px;width:300px;text-align:right;font-size:6.8px;line-height:9.52px;color:#2b2b2b;font-weight:normal;">0</div>
<div class="t" style="left:575.00px;top:377.74px;width:300px;text-align:right;font-size:6.8px;line-height:9.52px;color:#2b2b2b;font-weight:normal;">0</div>
<div class="b" style="left:616.80px;top:189.20px;width:31.30px;height:9.40px;background:#3daee9;"></div>
<div class="t" style="left:347.50px;top:189.54px;width:300px;text-align:right;font-size:6.8px;line-height:9.52px;color:#fff;font-weight:normal;">12534 TiB</div>
<div class="b" style="left:32.90px;top:149.00px;width:89.10px;height:238.20px;background:#a1a0a5;border-radius:2px;box-shadow:0.5px 0.5px 1px rgba(0,0,0,0.25);"></div>
<svg class="b" style="left:657px;top:193.5px" width="11" height="14" viewBox="0 0 11 14"><path d="M1.6 1 L1.6 11.2 L4.2 9.4 L6.0 12.6 L7.6 11.8 L6.0 8.6 L9.6 8.4 Z" fill="#fff" stroke="#6a6a6a" stroke-width="0.9" stroke-linejoin="round"/></svg>
<div class="b" style="left:24.00px;top:431.00px;width:856.00px;height:30.00px;background:#e4e4e4;"></div>
<div class="b" style="left:24.00px;top:431.00px;width:5.00px;height:30.00px;background:#9b9b9b;"></div>
<svg class="b" style="left:24.00px;top:445.00px" width="5" height="5" viewBox="0 0 5 5"><path d="M1.1 3.6 L3.9 3.6 L2.5 1.0 Z" fill="#fff"/></svg>
<div class="t" style="left:33.00px;top:434.09px;font-size:8.3px;line-height:11.620000000000001px;color:#111;font-weight:bold;transform:scaleX(0.93);transform-origin:0 0;">Zone</div>
<div class="t" style="left:215.30px;top:434.09px;font-size:8.3px;line-height:11.620000000000001px;color:#111;font-weight:bold;transform:scaleX(0.93);transform-origin:0 0;">Requests</div>
<div class="b" style="left:211.00px;top:431.00px;width:1.00px;height:30.00px;background:#fff;"></div>
<div class="t" style="left:320.50px;top:434.09px;font-size:8.3px;line-height:11.620000000000001px;color:#111;font-weight:bold;transform:scaleX(0.93);transform-origin:0 0;">Responses</div>
<div class="b" style="left:316.50px;top:431.00px;width:1.00px;height:30.00px;background:#fff;"></div>
<div class="t" style="left:649.80px;top:434.09px;font-size:8.3px;line-height:11.620000000000001px;color:#111;font-weight:bold;transform:scaleX(0.93);transform-origin:0 0;">Traffic</div>
<div class="b" style="left:645.00px;top:431.00px;width:1.00px;height:30.00px;background:#fff;"></div>
<div class="t" style="left:-23.30px;top:450.37px;width:300px;text-align:right;font-size:5.9px;line-height:8.26px;color:#303030;font-weight:normal;">Total</div>
<div class="t" style="left:12.00px;top:450.37px;width:300px;text-align:right;font-size:5.9px;line-height:8.26px;color:#303030;font-weight:normal;">Req/s</div>
<div class="t" style="left:39.50px;top:450.37px;width:300px;text-align:right;font-size:5.9px;line-height:8.26px;color:#303030;font-weight:normal;">1xx</div>
<div class="t" style="left:107.50px;top:450.37px;width:300px;text-align:right;font-size:5.9px;line-height:8.26px;color:#303030;font-weight:normal;">2xx</div>
<div class="t" style="left:165.80px;top:450.37px;width:300px;text-align:right;font-size:5.9px;line-height:8.26px;color:#303030;font-weight:normal;">3xx</div>
<div class="t" style="left:224.20px;top:450.37px;width:300px;text-align:right;font-size:5.9px;line-height:8.26px;color:#303030;font-weight:normal;">4xx</div>
<div class="t" style="left:271.50px;top:450.37px;width:300px;text-align:right;font-size:5.9px;line-height:8.26px;color:#303030;font-weight:normal;">5xx</div>
<div class="t" style="left:341.00px;top:450.37px;width:300px;text-align:right;font-size:5.9px;line-height:8.26px;color:#303030;font-weight:normal;">Total</div>
<div class="t" style="left:399.70px;top:450.37px;width:300px;text-align:right;font-size:5.9px;line-height:8.26px;color:#303030;font-weight:normal;">Sent/s</div>
<div class="t" style="left:458.80px;top:450.37px;width:300px;text-align:right;font-size:5.9px;line-height:8.26px;color:#303030;font-weight:normal;">Rcvd/s</div>
<div class="t" style="left:517.20px;top:450.37px;width:300px;text-align:right;font-size:5.9px;line-height:8.26px;color:#303030;font-weight:normal;">Sent</div>
<div class="t" style="left:575.60px;top:450.37px;width:300px;text-align:right;font-size:5.9px;line-height:8.26px;color:#303030;font-weight:normal;">Rcvd</div>
<div class="b" style="left:24.00px;top:461.00px;width:5.00px;height:19.15px;background:#62b946;"></div>
<div class="b" style="left:29.00px;top:479.65px;width:851.00px;height:1.00px;background:#eeeeee;"></div>
<div class="b" style="left:24.00px;top:479.00px;width:5.00px;height:1.00px;background:rgba(255,255,255,0.3);"></div>
<div class="b" style="left:24.00px;top:480.15px;width:5.00px;height:19.15px;background:#62b946;"></div>
<div class="b" style="left:29.00px;top:498.80px;width:851.00px;height:1.00px;background:#eeeeee;"></div>
<div class="b" style="left:24.00px;top:498.00px;width:5.00px;height:1.00px;background:rgba(255,255,255,0.3);"></div>
<div class="b" style="left:24.00px;top:499.30px;width:5.00px;height:19.15px;background:#62b946;"></div>
<div class="b" style="left:29.00px;top:517.95px;width:851.00px;height:1.00px;background:#eeeeee;"></div>
<div class="b" style="left:24.00px;top:517.00px;width:5.00px;height:1.00px;background:rgba(255,255,255,0.3);"></div>
<div class="b" style="left:24.00px;top:518.45px;width:5.00px;height:19.15px;background:#62b946;"></div>
<div class="b" style="left:470.80px;top:480.15px;width:57.20px;height:19.15px;background:#ef3b3e;"></div>
<div class="t" style="left:-23.30px;top:466.71px;width:300px;text-align:right;font-size:6.8px;line-height:9.52px;color:#2b2b2b;font-weight:normal;">142629176</div>
<div class="t" style="left:12.00px;top:466.71px;width:300px;text-align:right;font-size:6.8px;line-height:9.52px;color:#2b2b2b;font-weight:normal;">47</div>
<div class="t" style="left:39.50px;top:466.71px;width:300px;text-align:right;font-size:6.8px;line-height:9.52px;color:#2b2b2b;font-weight:normal;">0</div>
<div class="t" style="left:107.50px;top:466.71px;width:300px;text-align:right;font-size:6.8px;line-height:9.52px;color:#2b2b2b;font-weight:normal;"><span class="u">105832538</span></div>
<div class="t" style="left:165.80px;top:466.71px;width:300px;text-align:right;font-size:6.8px;line-height:9.52px;color:#2b2b2b;font-weight:normal;"><span class="u">4362</span></div>
<div class="t" style="left:224.20px;top:466.71px;width:300px;text-align:right;font-size:6.8px;line-height:9.52px;color:#2b2b2b;font-weight:normal;"><span class="u">36159954</span></div>
<div class="t" style="left:271.50px;top:466.71px;width:300px;text-align:right;font-size:6.8px;line-height:9.52px;color:#2b2b2b;font-weight:normal;"><span class="u">632322</span></div>
<div class="t" style="left:341.00px;top:466.71px;width:300px;text-align:right;font-size:6.8px;line-height:9.52px;color:#2b2b2b;font-weight:normal;">142568193</div>
<div class="t" style="left:399.70px;top:466.71px;width:300px;text-align:right;font-size:6.8px;line-height:9.52px;color:#2b2b2b;font-weight:normal;">59.2 KiB</div>
<div class="t" style="left:458.80px;top:466.71px;width:300px;text-align:right;font-size:6.8px;line-height:9.52px;color:#2b2b2b;font-weight:normal;">14.1 KiB</div>
<div class="t" style="left:517.20px;top:466.71px;width:300px;text-align:right;font-size:6.8px;line-height:9.52px;color:#2b2b2b;font-weight:normal;">231 GiB</div>
<div class="t" style="left:575.60px;top:466.71px;width:300px;text-align:right;font-size:6.8px;line-height:9.52px;color:#2b2b2b;font-weight:normal;">37.8 GiB</div>
<div class="t" style="left:-23.30px;top:485.86px;width:300px;text-align:right;font-size:6.8px;line-height:9.52px;color:#2b2b2b;font-weight:normal;">7369186283</div>
<div class="t" style="left:12.00px;top:485.86px;width:300px;text-align:right;font-size:6.8px;line-height:9.52px;color:#2b2b2b;font-weight:normal;">3449</div>
<div class="t" style="left:39.50px;top:485.86px;width:300px;text-align:right;font-size:6.8px;line-height:9.52px;color:#2b2b2b;font-weight:normal;">0</div>
<div class="t" style="left:107.50px;top:485.86px;width:300px;text-align:right;font-size:6.8px;line-height:9.52px;color:#2b2b2b;font-weight:normal;"><span class="u">7364612647</span></div>
<div class="t" style="left:165.80px;top:485.86px;width:300px;text-align:right;font-size:6.8px;line-height:9.52px;color:#2b2b2b;font-weight:normal;"><span class="u">211001</span></div>
<div class="t" style="left:224.20px;top:485.86px;width:300px;text-align:right;font-size:6.8px;line-height:9.52px;color:#fff;font-weight:normal;">4309098</div>
<div class="t" style="left:271.50px;top:485.86px;width:300px;text-align:right;font-size:6.8px;line-height:9.52px;color:#2b2b2b;font-weight:normal;"><span class="u">53537</span></div>
<div class="t" style="left:341.00px;top:485.86px;width:300px;text-align:right;font-size:6.8px;line-height:9.52px;color:#2b2b2b;font-weight:normal;">7367898208</div>
<div class="t" style="left:399.70px;top:485.86px;width:300px;text-align:right;font-size:6.8px;line-height:9.52px;color:#2b2b2b;font-weight:normal;">4.51 GiB</div>
<div class="t" style="left:458.80px;top:485.86px;width:300px;text-align:right;font-size:6.8px;line-height:9.52px;color:#2b2b2b;font-weight:normal;">797 KiB</div>
<div class="t" style="left:517.20px;top:485.86px;width:300px;text-align:right;font-size:6.8px;line-height:9.52px;color:#2b2b2b;font-weight:normal;">11058 TiB</div>
<div class="t" style="left:575.60px;top:485.86px;width:300px;text-align:right;font-size:6.8px;line-height:9.52px;color:#2b2b2b;font-weight:normal;">1.72 TiB</div>
<div class="t" style="left:-23.30px;top:505.01px;width:300px;text-align:right;font-size:6.8px;line-height:9.52px;color:#2b2b2b;font-weight:normal;">0</div>
<div class="t" style="left:12.00px;top:505.01px;width:300px;text-align:right;font-size:6.8px;line-height:9.52px;color:#2b2b2b;font-weight:normal;">0</div>
<div class="t" style="left:224.20px;top:505.01px;width:300px;text-align:right;font-size:6.8px;line-height:9.52px;color:#2b2b2b;font-weight:normal;"><span class="u">NaN</span></div>
<div class="t" style="left:399.70px;top:505.01px;width:300px;text-align:right;font-size:6.8px;line-height:9.52px;color:#2b2b2b;font-weight:normal;">0</div>
<div class="t" style="left:458.80px;top:505.01px;width:300px;text-align:right;font-size:6.8px;line-height:9.52px;color:#2b2b2b;font-weight:normal;">0</div>
<div class="t" style="left:517.20px;top:505.01px;width:300px;text-align:right;font-size:6.8px;line-height:9.52px;color:#2b2b2b;font-weight:normal;">0</div>
<div class="t" style="left:575.60px;top:505.01px;width:300px;text-align:right;font-size:6.8px;line-height:9.52px;color:#2b2b2b;font-weight:normal;">0</div>
<div class="t" style="left:-23.30px;top:524.17px;width:300px;text-align:right;font-size:6.8px;line-height:9.52px;color:#2b2b2b;font-weight:normal;">0</div>
<div class="t" style="left:12.00px;top:524.17px;width:300px;text-align:right;font-size:6.8px;line-height:9.52px;color:#2b2b2b;font-weight:normal;">0</div>
<div class="t" style="left:224.20px;top:524.17px;width:300px;text-align:right;font-size:6.8px;line-height:9.52px;color:#2b2b2b;font-weight:normal;"><span class="u">NaN</span></div>
<div class="t" style="left:399.70px;top:524.17px;width:300px;text-align:right;font-size:6.8px;line-height:9.52px;color:#2b2b2b;font-weight:normal;">0</div>
<div class="t" style="left:458.80px;top:524.17px;width:300px;text-align:right;font-size:6.8px;line-height:9.52px;color:#2b2b2b;font-weight:normal;">0</div>
<div class="t" style="left:517.20px;top:524.17px;width:300px;text-align:right;font-size:6.8px;line-height:9.52px;color:#2b2b2b;font-weight:normal;">0</div>
<div class="t" style="left:575.60px;top:524.17px;width:300px;text-align:right;font-size:6.8px;line-height:9.52px;color:#2b2b2b;font-weight:normal;">0</div>
<div class="t" style="left:102.40px;top:466.78px;font-size:6.85px;line-height:9.589999999999998px;color:#111;font-weight:bold;">_m3u8</div>
<div class="t" style="left:102.40px;top:485.93px;font-size:6.85px;line-height:9.589999999999998px;color:#111;font-weight:bold;">_ts_m4s_mp4</div>
<div class="t" style="left:102.40px;top:505.08px;font-size:6.85px;line-height:9.589999999999998px;color:#111;font-weight:bold;">_jpg</div>
<div class="t" style="left:102.40px;top:524.23px;font-size:6.85px;line-height:9.589999999999998px;color:#111;font-weight:bold;">od_mpd</div>
<div class="b" style="left:30.10px;top:463.60px;width:72.90px;height:72.40px;background:#a1a0a5;border-radius:2px;box-shadow:0.5px 0.5px 1px rgba(0,0,0,0.25);"></div>
<div class="b" style="left:8.00px;top:267.20px;width:6.60px;height:49.50px;background:#b7b7b7;"></div>
<div class="b" style="left:24.00px;top:537.60px;width:5.00px;height:2.40px;background:#62b946;"></div>
</div>
</body></html>
